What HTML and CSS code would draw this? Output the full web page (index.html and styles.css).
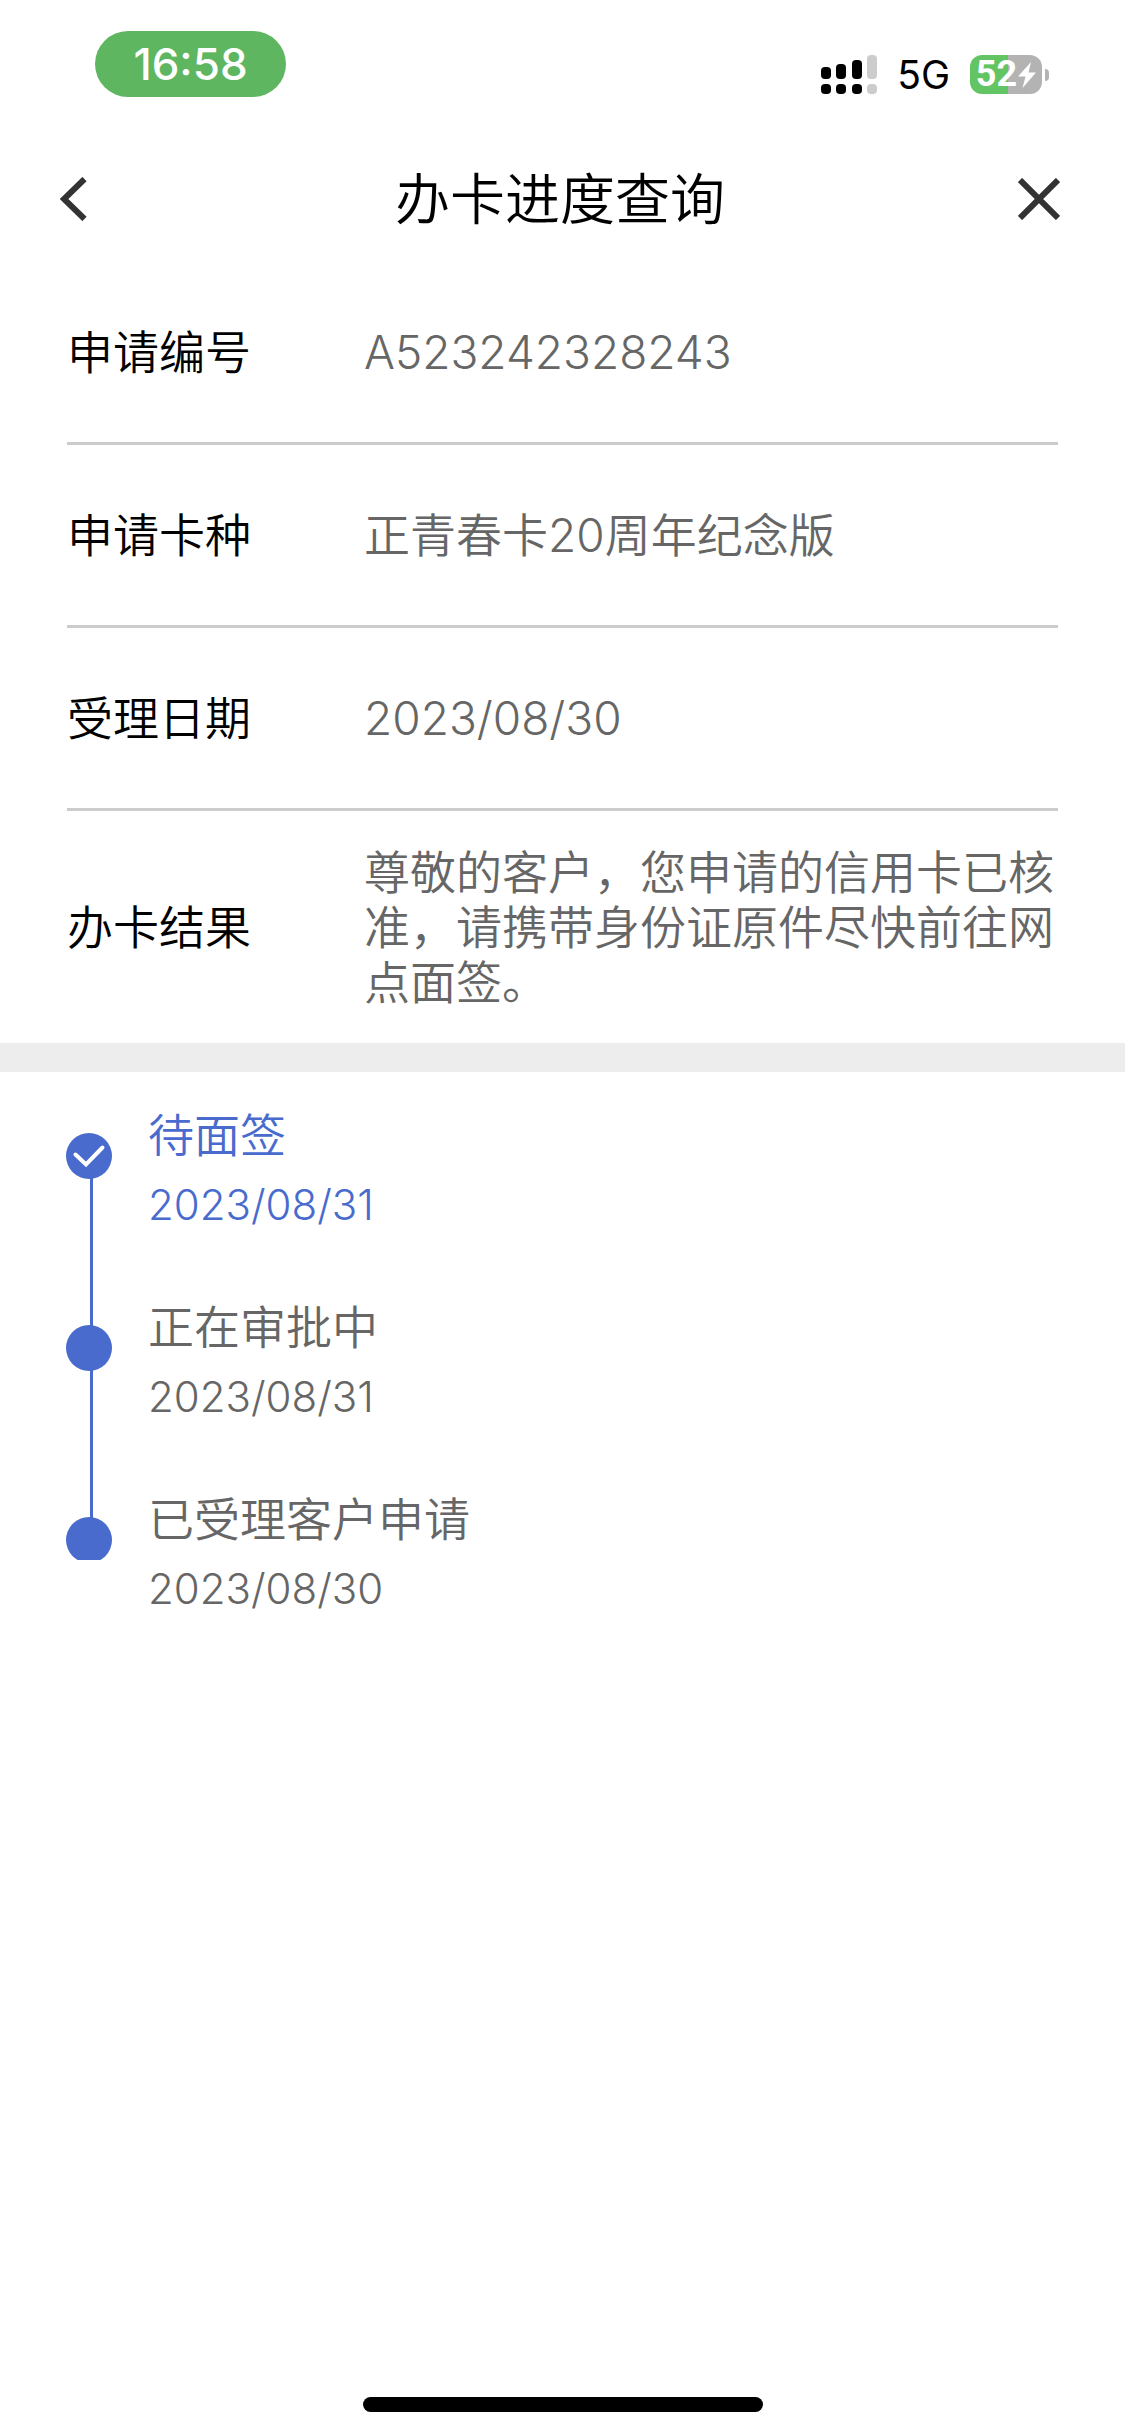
FILE: index.html
```html
<!DOCTYPE html>
<html lang="zh-CN">
<head>
    <meta charset="UTF-8">
    <meta name="viewport" content="width=device-width, initial-scale=1.0">
    <title>办卡进度查询</title>
    <link rel="stylesheet" href="styles.css">
</head>
<body>
<div class="status-bar">
    <div class="time">16:58</div>
    <div class="status-icons">
        <svg class="signal" width="56" height="39" viewBox="0 0 56 39">
            <rect x="0" y="12" width="10" height="12" rx="4"/>
            <rect x="15" y="9" width="10" height="15" rx="4"/>
            <rect x="31" y="5" width="10" height="19" rx="4"/>
            <rect x="0" y="29" width="10" height="10" rx="4"/>
            <rect x="15" y="29" width="10" height="10" rx="4"/>
            <rect x="31" y="29" width="10" height="10" rx="4"/>
            <rect x="46" y="0" width="10" height="24" rx="4" fill="#cccccc"/>
            <rect x="46" y="29" width="10" height="10" rx="4" fill="#cccccc"/>
        </svg>
        <span class="network">5G</span>
        <div class="battery">
            <div class="battery-body">
                <span>52</span>
                <svg width="18" height="26" viewBox="0 0 18 26">
                    <path d="M13 0L0 14.500H7.500L4.500 26L18 10.500H10.500Z" fill="#ffffff"/>
                </svg>
            </div>
            <div class="battery-tip"></div>
        </div>
    </div>
</div>

<header class="header">
    <button type="button" class="icon-button" aria-label="返回">
        <svg width="27" height="44" viewBox="0 0 27 44">
            <path d="M24.500 2L4 22L24.500 42" fill="none" stroke="#333333" stroke-width="6"/>
        </svg>
    </button>
    <h1>办卡进度查询</h1>
    <button type="button" class="icon-button" aria-label="关闭">
        <svg width="42" height="42" viewBox="0 0 42 42">
            <path d="M2 2L40 40M40 2L2 40" fill="none" stroke="#333333" stroke-width="6"/>
        </svg>
    </button>
</header>

<main>
    <dl class="info">
        <div class="info-row">
            <dt>申请编号</dt>
            <dd>A523242328243</dd>
        </div>
        <div class="info-row">
            <dt>申请卡种</dt>
            <dd>正青春卡20周年纪念版</dd>
        </div>
        <div class="info-row">
            <dt>受理日期</dt>
            <dd>2023/08/30</dd>
        </div>
        <div class="info-row result">
            <dt>办卡结果</dt>
            <dd>尊敬的客户，您申请的信用卡已核准，请携带身份证原件尽快前往网点面签。</dd>
        </div>
    </dl>

    <ol class="timeline">
        <li class="step current">
            <div class="marker">
                <svg width="46" height="46" viewBox="0 0 46 46">
                    <circle cx="23" cy="23" r="23"/>
                    <path d="M9.500 21.500L20 31.500L36.500 14.500" fill="none" stroke="#ffffff" stroke-width="4" stroke-linecap="round"/>
                </svg>
            </div>
            <div class="step-text">
                <p class="step-title">待面签</p>
                <p class="step-date">2023/08/31</p>
            </div>
        </li>
        <li class="step">
            <div class="marker">
                <svg width="46" height="46" viewBox="0 0 46 46">
                    <circle cx="23" cy="23" r="23"/>
                </svg>
            </div>
            <div class="step-text">
                <p class="step-title">正在审批中</p>
                <p class="step-date">2023/08/31</p>
            </div>
        </li>
        <li class="step">
            <div class="marker">
                <svg width="46" height="43" viewBox="0 0 46 43">
                    <circle cx="23" cy="23" r="23"/>
                </svg>
            </div>
            <div class="step-text">
                <p class="step-title">已受理客户申请</p>
                <p class="step-date">2023/08/30</p>
            </div>
        </li>
    </ol>
</main>

<div class="home-indicator"></div>
</body>
</html>
```
FILE: styles.css
```css
* {
    box-sizing: border-box;
}
body {
    margin: 0;
    min-height: 100vh;
    display: flex;
    flex-direction: column;
    background-color: #fff;
    color: #000;
    font-family: Inter, "Noto Sans CJK SC", sans-serif;
    font-size: 46px;
    font-weight: 350;
    line-height: 55px;
}
h1, p, dl, dd, ol {
    margin: 0;
    padding: 0;
}
svg {
    display: block;
}
.status-bar {
    display: flex;
    justify-content: space-between;
    align-items: flex-start;
    padding: 31px 76px 0 95px;
}
.time {
    width: 191px;
    border-radius: 33px;
    background-color: #5eb660;
    color: #fff;
    font-size: 44px;
    font-weight: 500;
    line-height: 66px;
    text-align: center;
}
.status-icons {
    display: flex;
    align-items: center;
    gap: 20px;
    padding-top: 24px;
    height: 63px;
}
.network {
    font-size: 39px;
    font-weight: 400;
    line-height: 39px;
}
.battery {
    display: flex;
    align-items: center;
    gap: 3px;
}
.battery-body {
    display: flex;
    align-items: center;
    justify-content: center;
    gap: 1px;
    width: 72px;
    height: 39px;
    border-radius: 12px;
    background: linear-gradient(to right, #62c462 53%, #b3b3b3 53%);
    color: #fff;
    font-family: Roboto, sans-serif;
    font-size: 36px;
    font-weight: 700;
    line-height: 39px;
}
.battery-tip {
    width: 4px;
    height: 12px;
    border-radius: 0 4px 4px 0;
    background-color: #b3b3b3;
}
.header {
    display: flex;
    justify-content: space-between;
    align-items: center;
    height: 128px;
    margin-top: 38px;
    margin-bottom: -1px;
    padding: 0 65px 0 60px;
}
.header h1 {
    font-size: 55px;
    font-weight: 350;
    line-height: 66px;
}
.icon-button {
    display: flex;
    width: 42px;
    padding: 0;
    border: none;
    background: none;
    cursor: pointer;
}
.icon-button:last-child {
    justify-content: flex-end;
}
.info {
    padding: 0 67px;
    border-bottom: 29px solid #ededed;
}
.info-row {
    display: flex;
    align-items: center;
    min-height: 183px;
    border-bottom: 3px solid #ccc;
}
.info-row dt {
    flex: none;
    width: 297px;
}
.info-row dd {
    color: #666;
}
.result {
    min-height: 232px;
    border-bottom: none;
}
.timeline {
    padding: 33px 66px;
    list-style: none;
}
.step {
    display: flex;
    gap: 36px;
    min-height: 192px;
    color: #666;
}
.marker {
    position: relative;
    flex: none;
    width: 46px;
    padding-top: 28px;
    fill: #486bcd;
}
/* line that runs down to the next step */
.step:not(:last-child) .marker::after {
    content: "";
    position: absolute;
    top: 72px;
    bottom: -30px;
    left: 24px;
    width: 3px;
    background-color: #486bcd;
}
.step-title {
    line-height: 60px;
}
.step-date {
    margin-top: 10px;
    font-size: 42px;
    line-height: 60px;
}
.current {
    color: #486bcd;
}
.home-indicator {
    width: 400px;
    height: 15px;
    margin: auto auto 23px;
    border-radius: 8px;
    background-color: #000;
}
```
